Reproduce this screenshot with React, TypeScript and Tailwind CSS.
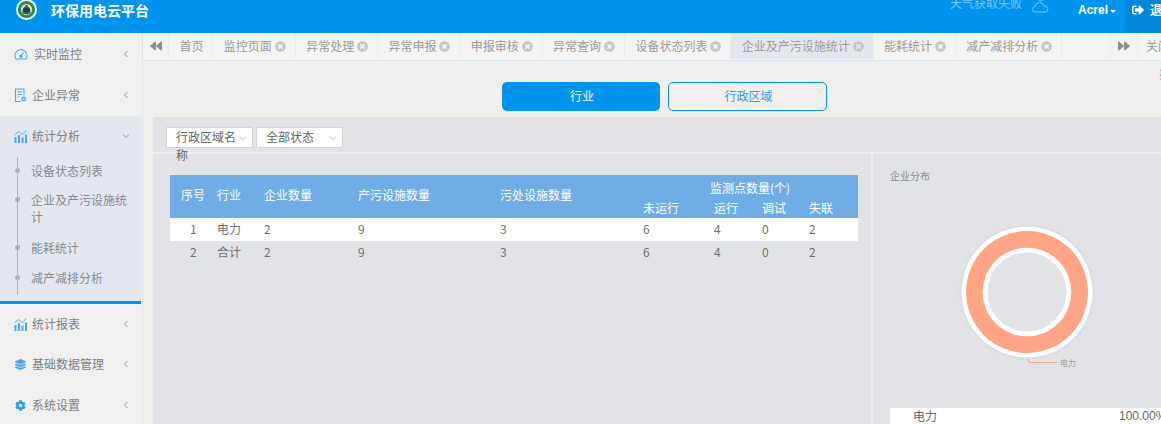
import React from "react";
import { FaCog, FaLayerGroup, FaSignOutAlt, FaBackward, FaForward, FaTimesCircle } from "react-icons/fa";

const Blue = "#4ca6ee";

function GaugeIcon() {
  return (
    <svg width="14" height="12" viewBox="0 0 14 12" fill="none" stroke={Blue} strokeWidth="1.2">
      <path d="M2 11 A6 6 0 1 1 12 11 Z" />
      <path d="M7 8 L9.5 4.5" />
      <circle cx="7" cy="8.2" r="1" fill={Blue} />
    </svg>
  );
}
function FileIcon() {
  return (
    <svg width="13" height="15" viewBox="0 0 13 15" fill="none" stroke={Blue} strokeWidth="1.1">
      <path d="M7 13.5H1.5V1h8.5v6.5" />
      <path d="M3.5 4h4.5M3.5 6.5h4.5M3.5 9h2" />
      <circle cx="9.7" cy="11" r="2.4" fill={Blue} stroke="none" />
      <path d="M8.8 10.1l1.8 1.8M10.6 10.1l-1.8 1.8" stroke="#fff" strokeWidth=".7" />
    </svg>
  );
}
function ChartIcon() {
  return (
    <svg width="13" height="13" viewBox="0 0 13 13" fill={Blue}>
      <rect x="0.5" y="7" width="2" height="6" />
      <rect x="4" y="5" width="2" height="8" />
      <rect x="7.5" y="7.5" width="2" height="5.5" />
      <rect x="11" y="4.5" width="2" height="8.5" />
      <path d="M0.5 5 L4.5 1.5 L8 4.5 L12.5 0.5" fill="none" stroke={Blue} strokeWidth=".9" />
    </svg>
  );
}
function WeatherIcon() {
  return (
    <svg width="17" height="14" viewBox="0 0 17 14" fill="none" stroke="#7cc8f4" strokeWidth="1">
      <path d="M3.5 13 a2.8 2.8 0 0 1 -.3 -5.6 a4.6 4.6 0 0 1 9 -.4 a3 3 0 0 1 1.2 6 Z" />
      <path d="M5 -2 a3.5 3.5 0 0 0 7 0" />
    </svg>
  );
}
function Logo() {
  return (
    <svg width="21" height="21" viewBox="0 0 21 21">
      <circle cx="10.5" cy="10.5" r="10.5" fill="#e9f5ea" />
      <circle cx="10.5" cy="10.5" r="8.6" fill="#2c8a4a" />
      <circle cx="10.5" cy="10.5" r="5.6" fill="#d8e6da" />
      <circle cx="10.5" cy="11.5" r="3.8" fill="#123f5c" />
      <path d="M6.5 13h8v1.5h-8z" fill="#1f7a3a" />
      <circle cx="10.5" cy="7.4" r="1.6" fill="#c8323a" />
    </svg>
  );
}

function Chevron({ down }: { down?: boolean }) {
  return (
    <svg width="8" height="8" viewBox="0 0 8 8" fill="none" stroke="#8b98a6" strokeWidth="1">
      {down ? <path d="M1 2.5 L4 5.5 L7 2.5" /> : <path d="M5.5 1 L2.5 4 L5.5 7" />}
    </svg>
  );
}

function MenuItem({ icon, label, h, active, gap }: { icon: React.ReactNode; label: string; h: string; active?: boolean; gap: string }) {
  return (
    <div className={`flex items-center ${h} pl-[13px] pr-[11px] ${gap} text-[12px] text-[#7a7f85]`}>
      <span className="flex w-[15px] shrink-0 items-center justify-center">{icon}</span>
      <span className="flex-1">{label}</span>
      <Chevron down={active} />
    </div>
  );
}

function SubItem({ children, h }: { children: React.ReactNode; h: string }) {
  return (
    <div className={`relative ${h} pl-[31px] pr-[6px] text-[12px] leading-[17px] text-[#858a92]`}>
      <span className="absolute left-[15px] top-[6px] h-[5px] w-[5px] rounded-full bg-[#aeaec6]" />
      {children}
    </div>
  );
}

function Tab({ label, closable = true, active }: { label: string; closable?: boolean; active?: boolean }) {
  return (
    <div className={`flex h-[26px] shrink-0 items-center gap-[3px] border-r border-[#ececec] pl-[10.5px] pr-[8.8px] text-[12px] text-[#9a9a9a] ${active ? "bg-[#e4e8ee]" : ""}`}>
      <span>{label}</span>
      {closable && <FaTimesCircle className="h-[11px] w-[11px] text-[#c6c6c6]" />}
    </div>
  );
}

function Select({ label, w }: { label: string; w: string }) {
  return (
    <div className={`relative h-[21px] ${w} border border-[#d4d4d4] bg-white pl-[9px] pr-[16px] text-[12px] leading-[18px] text-[#666]`}>
      {label}
      <svg className="absolute right-[5px] top-[7px]" width="9" height="7" viewBox="0 0 9 7" fill="none" stroke="#bbb" strokeWidth="1">
        <path d="M1 1.5 L4.5 5 L8 1.5" />
      </svg>
    </div>
  );
}

const rows = [
  ["1", "电力", "2", "9", "3", "6", "4", "0", "2"],
  ["2", "合计", "2", "9", "3", "6", "4", "0", "2"],
];

export default function App() {
  return (
    <div
      className="flex h-[424px] w-[1161px] flex-col overflow-hidden bg-[#f0efee]"
      style={{ fontFamily: '"Noto Sans CJK SC", "Liberation Sans", sans-serif' }}
    >
      <header className="flex h-[33px] shrink-0 items-start bg-[#0094ee] text-white">
        <div className="ml-[16px] mt-[-1px]"><Logo /></div>
        <div className="ml-[14px] text-[14px] font-bold leading-[20px]">环保用电云平台</div>
        <div className="ml-auto mt-[-6px] text-[12px] leading-[18px] text-[#7cc8f4]">天气获取失败</div>
        <div className="ml-[10px] mt-[-1px]"><WeatherIcon /></div>
        <div className="ml-[29px] mt-[1px] flex items-center text-[12px] font-bold leading-[18px]" style={{ fontFamily: '"Liberation Sans", sans-serif' }}>
          Acrel
          <span className="ml-[2px] mt-[2px] h-0 w-0 border-x-[3px] border-t-[3px] border-x-transparent border-t-white" />
        </div>
        <div className="ml-[9px] flex h-[33px] w-[36px] shrink-0 items-start gap-[6px] overflow-hidden bg-[#0386d8] pl-[7px] pt-[1px]">
          <FaSignOutAlt className="mt-[3px] h-[12px] w-[12px] shrink-0" />
          <span className="shrink-0 text-[12px] font-bold leading-[18px]">退出</span>
        </div>
      </header>

      <div className="flex min-h-0 flex-1">
        <aside className="w-[143px] shrink-0 border-r border-[#dce4ec] bg-[#f0f0f1]">
          <div className="w-[141px]">
            <MenuItem icon={<GaugeIcon />} label="实时监控" h="h-[42px]" gap="gap-[6px]" />
            <MenuItem icon={<FileIcon />} label="企业异常" h="h-[41px] pb-[1px]" gap="gap-[4px]" />
            <div className="bg-[#e4e8ee]">
              <MenuItem icon={<ChartIcon />} label="统计分析" h="h-[40px]" gap="gap-[4px]" active />
              <div className="relative pb-[1px] pt-[6px]">
                <span className="absolute bottom-[6px] left-[17px] top-[1px] w-px bg-[#aeaec6]" />
                <SubItem h="h-[29px]">设备状态列表</SubItem>
                <SubItem h="h-[48px]">企业及产污设施统计</SubItem>
                <SubItem h="h-[30px]">能耗统计</SubItem>
                <SubItem h="h-[31px]">减产减排分析</SubItem>
              </div>
            </div>
            <div className="h-[3px] bg-[#0094ee]" />
            <MenuItem icon={<ChartIcon />} label="统计报表" h="h-[40px]" gap="gap-[4px]" />
            <MenuItem icon={<FaLayerGroup className="h-[11px] w-[11px] text-[#4ca6ee]" />} label="基础数据管理" h="h-[40px]" gap="gap-[4px]" />
            <MenuItem icon={<FaCog className="h-[11px] w-[11px] text-[#2f9bec]" />} label="系统设置" h="h-[40px] pt-[2px]" gap="gap-[4px]" />
          </div>
        </aside>

        <main className="flex min-w-0 flex-1 flex-col">
          <nav className="flex h-[28px] shrink-0 border-b border-[#dde5ec] bg-[#f4f4f4]">
            <div className="flex h-[26px] w-[26px] shrink-0 items-center justify-center border-r border-[#ececec] text-[#8f8f8f]">
              <FaBackward className="h-[12px] w-[12px]" />
            </div>
            <Tab label="首页" closable={false} />
            <Tab label="监控页面" />
            <Tab label="异常处理" />
            <Tab label="异常申报" />
            <Tab label="申报审核" />
            <Tab label="异常查询" />
            <Tab label="设备状态列表" />
            <Tab label="企业及产污设施统计" active />
            <Tab label="能耗统计" />
            <Tab label="减产减排分析" />
            <div className="flex-1 border-r border-[#ececec]" />
            <div className="flex h-[26px] w-[27px] shrink-0 items-center justify-center border-r border-[#ececec] text-[#8f8f8f]">
              <FaForward className="h-[12px] w-[12px]" />
            </div>
            <div className="flex h-[26px] w-[23px] shrink-0 items-center overflow-hidden whitespace-nowrap pl-[8px] text-[12px] text-[#9a9a9a]">关闭操作</div>
          </nav>

          <div className="relative flex h-[56px] shrink-0 items-start justify-center gap-[8px] overflow-hidden pl-[25px] pt-[21px]">
            <button className="h-[29px] w-[158px] rounded-[5px] bg-[#0094ee] pb-[2px] pl-[2px] text-[12px] text-white">行业</button>
            <button className="h-[29px] w-[159px] rounded-[5px] border border-[#0094ee] pb-[2px] pl-[2px] text-[12px] text-[#2a9df0]">行政区域</button>
            <span className="absolute left-[1016px] top-[4px] text-[12px] text-[#9a9a9a]">操</span>
          </div>

          <section className="ml-[10px] flex min-h-0 flex-1 flex-col bg-[#e2e3e7]">
            <div className="flex h-[37px] shrink-0 items-start gap-[3px] border-b-2 border-[#f0efee] pl-[13px] pt-[10px]">
              <Select label="行政区域名称" w="w-[87px]" />
              <Select label="全部状态" w="w-[87px]" />
            </div>
            <div className="flex min-h-0 flex-1">
              <div className="w-[720px] shrink-0 border-r-2 border-[#eeeeef] pl-[17px] pt-[21px]">
                <table className="w-[688px] table-fixed border-collapse text-left text-[12px] text-[#6f6f6f]">
                  <colgroup>
                    <col className="w-[47px]" />
                    <col className="w-[47px]" />
                    <col className="w-[94px]" />
                    <col className="w-[142px]" />
                    <col className="w-[143px]" />
                    <col className="w-[71px]" />
                    <col className="w-[48px]" />
                    <col className="w-[47px]" />
                    <col className="w-[49px]" />
                  </colgroup>
                  <thead className="bg-[#70ade6] text-white">
                    <tr className="h-[24px]">
                      <th rowSpan={2} className="pb-[3px] pl-[11px] font-normal">序号</th>
                      <th rowSpan={2} className="pb-[3px] font-normal">行业</th>
                      <th rowSpan={2} className="pb-[3px] font-normal">企业数量</th>
                      <th rowSpan={2} className="pb-[3px] font-normal">产污设施数量</th>
                      <th rowSpan={2} className="pb-[3px] font-normal">污处设施数量</th>
                      <th colSpan={4} className="pl-[67px] pt-[1px] font-normal">监测点数量(个)</th>
                    </tr>
                    <tr className="h-[19px]">
                      <th className="pb-[1px] font-normal">未运行</th>
                      <th className="pb-[1px] font-normal">运行</th>
                      <th className="pb-[1px] font-normal">调试</th>
                      <th className="pb-[1px] font-normal">失联</th>
                    </tr>
                  </thead>
                  <tbody>
                    {rows.map((r, i) => (
                      <tr key={r[0]} className={`h-[23px] ${i === 0 ? "bg-white" : ""}`}>
                        {r.map((c, j) => (
                          <td key={j} className={j === 0 ? "pb-[1px] pl-[20px]" : "pb-[1px]"}>{c}</td>
                        ))}
                      </tr>
                    ))}
                  </tbody>
                </table>
              </div>
              <div className="relative min-w-0 flex-1 pl-[17px] pt-[15px]">
                <div className="text-[10px] leading-[14px] text-[#8a8a8a]">企业分布</div>
                <svg className="ml-[47px] mt-[42px] block" width="180" height="160" viewBox="0 0 180 160" fill="none">
                  <circle cx="90" cy="67" r="65.5" fill="#fff" style={{ filter: "drop-shadow(0 0 2px rgba(0,0,0,.08))" }} />
                  <circle cx="90" cy="67" r="61" fill="#ffa484" />
                  <circle cx="90" cy="67" r="44.3" fill="#fff" />
                  <circle cx="90" cy="67" r="39.6" fill="#e2e3e7" />
                  <path d="M90.5 133 L92 137.5 H120" stroke="#ffa484" strokeWidth="1" />
                  <text x="123" y="140.5" fontSize="8" fill="#999">电力</text>
                </svg>
                <div className="absolute bottom-0 left-[17px] flex h-[16px] w-[300px] bg-white pl-[23px] text-[12px] leading-[16px] text-[#666]">
                  <span>电力</span>
                  <span className="ml-[182px]" style={{ fontFamily: '"Liberation Sans", sans-serif' }}>100.00%</span>
                </div>
              </div>
            </div>
          </section>
        </main>
      </div>
    </div>
  );
}
